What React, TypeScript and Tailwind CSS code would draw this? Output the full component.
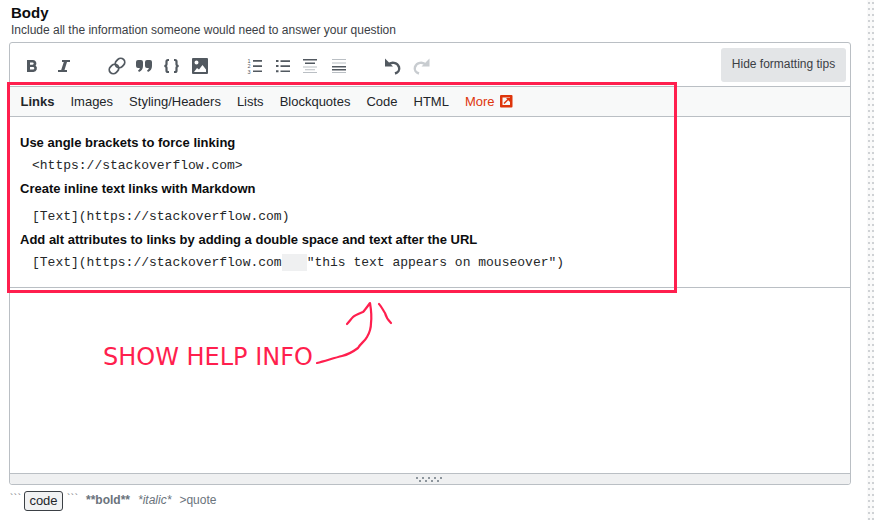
const tabs = ["Links", "Images", "Styling/Headers", "Lists", "Blockquotes", "Code", "HTML"];

function Ico({ children, className = "" }: { children: React.ReactNode; className?: string }) {
  return (
    <svg width="18" height="18" viewBox="0 0 18 18" fill="currentColor" fillRule="evenodd" className={className}>
      {children}
    </svg>
  );
}

function ToolBtn({ children, className = "" }: { children: React.ReactNode; className?: string }) {
  return <div className={`w-[18px] h-[18px] shrink-0 text-[#525960] ${className}`}>{children}</div>;
}

const quote = "M1 5a2 2 0 0 1 2-2h3a2 2 0 0 1 2 2v4c0 3-1.500 5-4 6l-1-1.500c1-.5 1.700-1.500 1.800-2.500H3a2 2 0 0 1-2-2Z";

function Toolbar() {
  return (
    <div className="h-[44px] flex items-center pl-[13px] pr-[4px] pt-[3px] border-b border-[#babfc4]">
      <ToolBtn><Ico><path d="M4 3h6a3.400 3.400 0 0 1 2.600 5.600A3.600 3.600 0 0 1 10.500 15H4V3Zm3 2.500v2.200h2.600a1.100 1.100 0 0 0 0-2.200H7Zm0 4.400v2.600h3a1.300 1.300 0 0 0 0-2.600H7Z" /></Ico></ToolBtn>
      <ToolBtn className="ml-[15px]"><Ico><path d="M6 3h8v2h-3L8.500 13H11v2H2v-2h3.200L7.800 5H6Z" /></Ico></ToolBtn>
      <ToolBtn className="ml-[34px]">
        <svg width="18" height="18" viewBox="0 0 18 18" fill="none" stroke="currentColor" strokeWidth="1.800">
          <rect x="1" y="8" width="10" height="8" rx="4" transform="rotate(-45 6 12)" />
          <rect x="7" y="2" width="10" height="8" rx="4" transform="rotate(-45 12 6)" />
        </svg>
      </ToolBtn>
      <ToolBtn className="ml-[9px]"><Ico><path d={quote} /><path d={quote} transform="translate(9 0)" /></Ico></ToolBtn>
      <ToolBtn className="ml-[10px]">
        <svg width="18" height="18" viewBox="0 0 18 18" fill="none" stroke="currentColor" strokeWidth="2.200">
          <path d="M6 3H5C4 3 3.500 3.500 3.500 4.500v2.800C3.500 8.200 2.800 8.800 1.500 9c1.300.2 2 .8 2 1.700v2.800c0 1 .5 1.500 1.500 1.500h1" />
          <path d="M11 3h1c1 0 1.500.5 1.500 1.500v2.800c0 .9.700 1.500 2 1.700-1.300.2-2 .8-2 1.700v2.800c0 1-.5 1.500-1.500 1.500h-1" />
        </svg>
      </ToolBtn>
      <ToolBtn className="ml-[10px]">
        <Ico><path d="M2 1h14a1 1 0 0 1 1 1v14a1 1 0 0 1-1 1H2a1 1 0 0 1-1-1V2a1 1 0 0 1 1-1Zm3.500 2.500a2 2 0 1 0 0 4 2 2 0 0 0 0-4ZM3 15h12v-2.500L11.500 8 8 12.500 6 11l-3 4Z" /></Ico>
      </ToolBtn>
      <ToolBtn className="ml-[37px]">
        <svg width="18" height="18" viewBox="0 0 18 18" fill="currentColor">
          <path d="M7 3h9v1.700H7zM7 8.200h9v1.700H7zM7 13.400h9v1.700H7z" />
          <text x="1.500" y="6" fontSize="5.500" fontFamily="Liberation Sans, sans-serif">1</text>
          <text x="1.500" y="11.300" fontSize="5.500" fontFamily="Liberation Sans, sans-serif">2</text>
          <text x="1.500" y="16.500" fontSize="5.500" fontFamily="Liberation Sans, sans-serif">3</text>
        </svg>
      </ToolBtn>
      <ToolBtn className="ml-[10px]"><Ico><path d="M2 3h2.500v2H2zM2 8h2.500v2H2zM2 13.200h2.500v2H2zM6.500 3.200H16v1.700H6.500zM6.500 8.200H16v1.700H6.500zM6.500 13.400H16v1.700H6.500z" /></Ico></ToolBtn>
      <ToolBtn className="ml-[10px]">
        <Ico>
          <path d="M1 2h14v1.600H1zM3 5.500h10V7H3z" />
          <path fill="#babfc4" d="M1 9.500h14v1H1zM3 12.300h10v1H3zM1 15h14v1H1z" />
        </Ico>
      </ToolBtn>
      <ToolBtn className="ml-[10px]">
        <Ico>
          <path fill="#babfc4" d="M2 2h14v1H2zM2 5.500h14v1H2zM2 15h14v1H2z" />
          <path d="M2 9h14v1.600H2zM2 12h14v1.600H2z" />
        </Ico>
      </ToolBtn>
      <ToolBtn className="ml-[36px]">
        <svg width="18" height="18" viewBox="0 0 18 18" fill="none">
          <path d="M4 8a6.500 6.500 0 0 1 11 2c1 3-1 5.500-4 6.500" stroke="currentColor" strokeWidth="2.400" />
          <path d="M1 1.500v8h8Z" fill="currentColor" />
        </svg>
      </ToolBtn>
      <ToolBtn className="ml-[10px] !text-[#c8ccd0]">
        <svg width="18" height="18" viewBox="0 0 18 18" fill="none">
          <path d="M14 8a6.500 6.500 0 0 0-11 2c-1 3 1 5.500 4 6.500" stroke="currentColor" strokeWidth="2.400" />
          <path d="M17.500 1.500v8h-8Z" fill="currentColor" />
        </svg>
      </ToolBtn>
      <button className="ml-auto w-[125px] h-[34px] rounded-[3px] bg-[#e3e5e7] text-[#3b4045] text-[12px] -mt-[2px] pb-[3px]">Hide formatting tips</button>
    </div>
  );
}

function HelpPanel() {
  return (
    <div className="border-b border-[#babfc4] h-[201px]">
      <div className="h-[30px] bg-[#f8f9f9] border-b border-[#babfc4] flex items-center pl-[10.500px] gap-[16px] text-[13px] text-[#232629]">
        {tabs.map((t, i) => (
          <span key={t} className={i === 0 ? "font-bold" : ""}>{t}</span>
        ))}
        <span className="text-[#de350b] flex items-center gap-[5px]">
          More
          <svg width="13" height="13" viewBox="0 0 13 13">
            <rect width="12.500" height="12.500" rx="1" fill="#de350b" />
            <rect x="2.500" y="2.500" width="7.500" height="7.500" fill="#f8f9f9" />
            <path d="M4 8.500 8.500 4" stroke="#de350b" strokeWidth="1.500" />
            <path d="M6 3h4v4Z" fill="#de350b" />
          </svg>
        </span>
      </div>
      <div className="pl-[10px] text-[13px] text-[#0c0d0e] leading-[17px]">
        <p className="font-bold pt-[17px]">Use angle brackets to force linking</p>
        <p className="font-['Liberation_Mono',monospace] text-[#242729] pl-[12px] pt-[6px]">&lt;https://stackoverflow.com&gt;</p>
        <p className="font-bold pt-[6px]">Create inline text links with Markdown</p>
        <p className="font-['Liberation_Mono',monospace] text-[#242729] pl-[12px] pt-[11px]">[Text](https://stackoverflow.com)</p>
        <p className="font-bold pt-[6px]">Add alt attributes to links by adding a double space and text after the URL</p>
        <p className="font-['Liberation_Mono',monospace] text-[#242729] pl-[12px] pt-[6px] whitespace-pre">
          [Text](https://stackoverflow.com<span className="bg-[#eff0f1] inline-block w-[25px] h-[17px] align-top"></span>"this text appears on mouseover")
        </p>
      </div>
    </div>
  );
}

export default function App() {
  return (
    <div className="relative w-[876px] h-[520px] overflow-hidden bg-white font-['Liberation_Sans',Arial,sans-serif]">
      <div className="ml-[9px] w-[842px] pt-[4px]">
        <h2 className="pl-[2px] text-[15px] leading-[17px] font-bold text-[#0c0d0e]">Body</h2>
        <p className="pl-[2px] pt-[1px] text-[12px] leading-[16px] text-[#3b4045]">Include all the information someone would need to answer your question</p>
        <div className="mt-[4px] h-[443px] border border-[#babfc4] rounded-[3px] flex flex-col">
          <Toolbar />
          <HelpPanel />
          <div className="flex-1" />
          <div className="h-[11px] bg-[#eff0f1] border-t border-[#babfc4] rounded-b-[3px] flex justify-center items-start pt-[3px]">
            <svg width="28" height="6" viewBox="0 0 28 6" fill="#8d959c" className="-translate-x-px">
              {[0, 6, 12, 18, 24].map((x) => <rect key={x} x={x + 1} y="0" width="2" height="2" />)}
              {[0, 6, 12, 18].map((x) => <rect key={x} x={x + 4} y="3" width="2" height="2" />)}
            </svg>
          </div>
        </div>
        <div className="flex items-center mt-[6px] text-[12px] text-[#6a737c] h-[20px]">
          <span className="text-[10px] leading-[10px] self-start tracking-[0.5px] mt-[3px] w-[15px] pl-[1px]">```</span>
          <code className="font-['Liberation_Sans',sans-serif] text-[13px] text-[#232629] bg-[#f1f2f3] border border-[#3b4045] rounded-[3px] w-[39px] h-[20px] flex items-center justify-center">code</code>
          <span className="text-[10px] leading-[10px] self-start tracking-[0.5px] mt-[3px] pl-[4px] w-[23px]">```</span>
          <b className="-mt-[2px]">**bold**</b>
          <i className="ml-[8px] -mt-[2px]">*italic*</i>
          <span className="ml-[8px] -mt-[2px]">&gt;quote</span>
        </div>
      </div>

      {/* screenshot annotation */}
      <div className="absolute left-[7px] top-[82px] w-[670px] h-[211px] border-[3px] border-[#ff1f4e]" />
      <div className="absolute left-[103px] top-[343px] text-[24px] leading-[28px] font-['DejaVu_Sans',sans-serif] text-[#ff1f4e]">SHOW HELP INFO</div>
      <svg className="absolute left-[310px] top-[295px]" width="90" height="75" viewBox="0 0 90 75" fill="none" stroke="#ff1f4e" strokeWidth="2.200" strokeLinecap="round" strokeLinejoin="round">
        <path d="M7 68C15 66 24 63 32 61C40 59 44 56 48 53C51 48 55 46 57 42C60 37 61 33 61 28C62 20 61 14 60 8C57 12 55 15 53 17C48 19 45 20 43 22C41 24 39 27 37 29" />
        <path d="M69 9C71 11 73 15 75 18C76 22 77 24 81 28" />
      </svg>

      {/* page gutter dots */}
      <div className="absolute top-0 bottom-0 left-[867px] w-[7px] bg-[#fafafa] bg-[radial-gradient(#cfd2d5_1px,transparent_1px)] bg-[length:4px_6px]" />
    </div>
  );
}
